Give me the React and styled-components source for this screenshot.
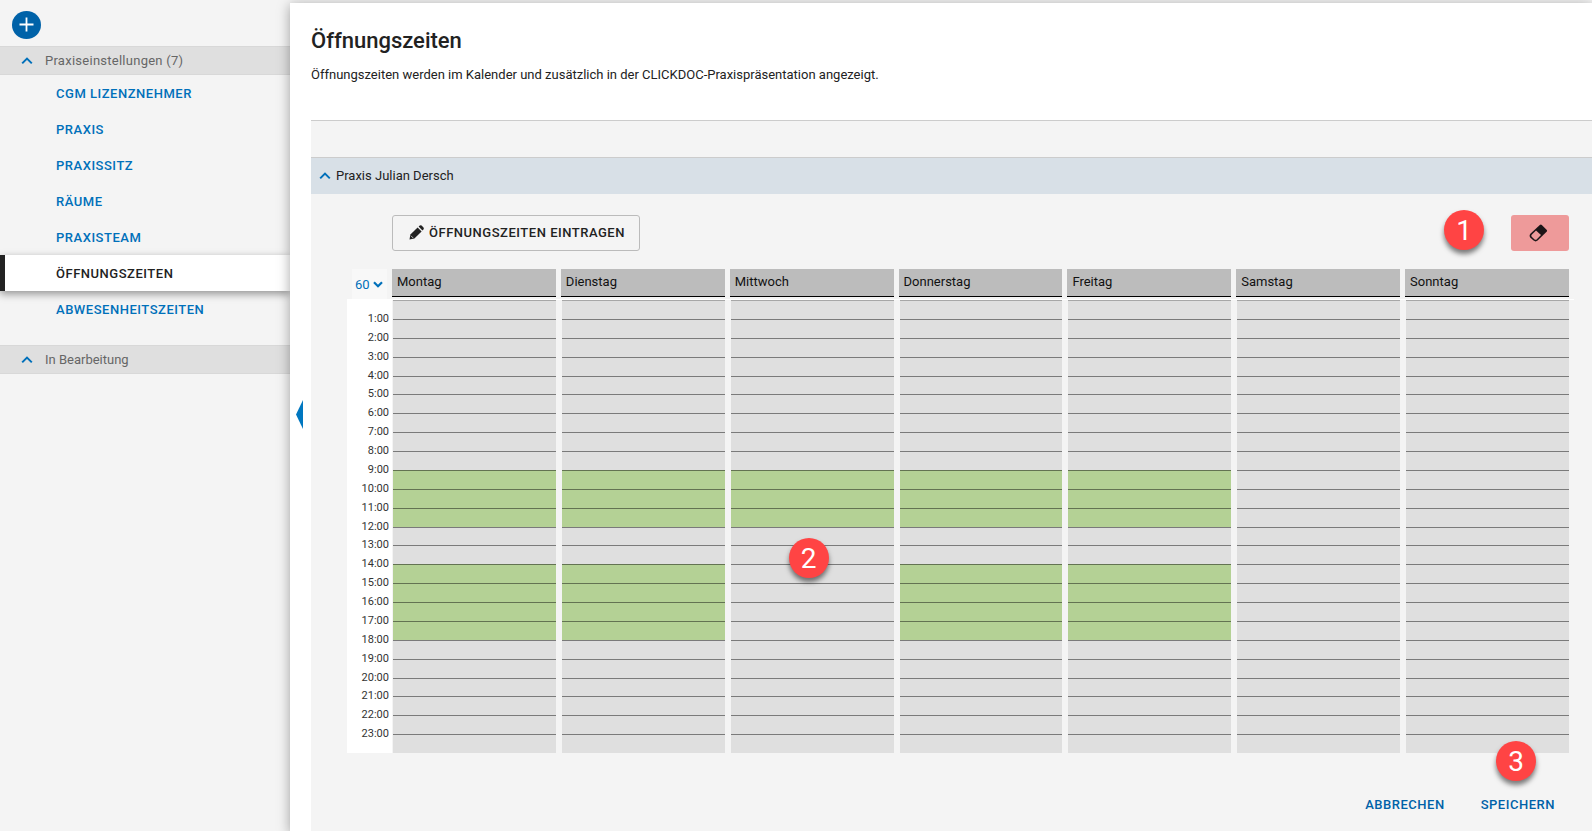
import React, { useState } from 'react';

import styled, { createGlobalStyle } from 'styled-components';

const NAV_ITEMS = [
  'CGM Lizenznehmer',
  'Praxis',
  'Praxissitz',
  'Räume',
  'Praxisteam',
  'Öffnungszeiten',
  'Abwesenheitszeiten',
];

const DAYS = [
  { name: 'Montag', open: [[9, 12], [14, 18]] },
  { name: 'Dienstag', open: [[9, 12], [14, 18]] },
  { name: 'Mittwoch', open: [[9, 12]] },
  { name: 'Donnerstag', open: [[9, 12], [14, 18]] },
  { name: 'Freitag', open: [[9, 12], [14, 18]] },
  { name: 'Samstag', open: [] },
  { name: 'Sonntag', open: [] },
];

const HOURS = Array.from({ length: 24 }, (_, hour) => hour);

const isOpen = (day, hour) =>
  day.open.some(([from, to]) => hour >= from && hour < to);

const ChevronUp = () => (
  <svg width='12' height='8' viewBox='0 0 12 8' fill='none' aria-hidden='true'>
    <path d='M1.2 6.4 6 1.6l4.8 4.8' stroke='#0070ba' strokeWidth='2' />
  </svg>
);

const ChevronDown = () => (
  <svg width='10' height='7' viewBox='0 0 10 7' fill='none' aria-hidden='true'>
    <path d='M1 1.2 5 5.2 9 1.2' stroke='#0070ba' strokeWidth='2.2' />
  </svg>
);

const PlusIcon = () => (
  <svg width='15' height='15' viewBox='0 0 15 15' aria-hidden='true'>
    <path d='M7.5 .5v14M.5 7.5h14' stroke='#fff' strokeWidth='1.8' />
  </svg>
);

const PencilIcon = () => (
  <svg width='15' height='15' viewBox='0 0 15 15' fill='#222' aria-hidden='true'>
    <path d='M0.5 14.5 1.4 9.6 8.6 2.4 12.6 6.4 5.4 13.6z' />
    <path d='M9.6 1.6 10.8 .5q.9-.7 1.8 0l1.9 1.9q.7.9 0 1.8l-1.1 1.2z' />
    <path d='M2 10.8 4.2 13' stroke='#f4f4f4' strokeWidth='.7' />
  </svg>
);

const EraserIcon = () => (
  <svg width='19' height='18' viewBox='0 0 19 18' aria-hidden='true'>
    <path
      d='M1.4 9.8 10.8 1q1-.9 2 0l4.8 4.8q.9 1 0 2L8.6 16.6q-2 1.6-4 0L1.4 13.8q-1.6-2 0-4z'
      fill='#1c1517'
    />
    <path
      d='M7 6.6 2.7 10.8q-.9 1 0 2l2.9 2.6q1 .7 2 0l4.4-4.3z'
      fill='#ee9a9a'
    />
  </svg>
);

const App = () => {
  const [interval, setInterval] = useState('60');

  return (
    <>
      <GlobalStyle />
      <Page>
        <Sidebar>
          <AddBar>
            <AddButton type='button' aria-label='Hinzufügen'>
              <PlusIcon />
            </AddButton>
          </AddBar>
          <GroupHeader type='button'>
            <ChevronUp />
            <GroupTitle $wide>Praxiseinstellungen (7)</GroupTitle>
          </GroupHeader>
          <NavList>
            {NAV_ITEMS.map(item => (
              <li key={item}>
                <NavLink href='#' $active={item === 'Öffnungszeiten'}>
                  {item}
                </NavLink>
              </li>
            ))}
          </NavList>
          <GroupHeader type='button'>
            <ChevronUp />
            <GroupTitle>In Bearbeitung</GroupTitle>
          </GroupHeader>
        </Sidebar>

        <Main>
          <CollapseStrip>
            <CollapseButton type='button' aria-label='Navigation einklappen'>
              <svg width='7' height='29' viewBox='0 0 7 29' aria-hidden='true'>
                <path d='M7 0v29L0 14.5z' fill='#0077c0' />
              </svg>
            </CollapseButton>
          </CollapseStrip>

          <Content>
            <Intro>
              <Title>Öffnungszeiten</Title>
              <Description>
                Öffnungszeiten werden im Kalender und zusätzlich in der
                CLICKDOC-Praxispräsentation angezeigt.
              </Description>
            </Intro>

            <Panel>
              <PanelHeader type='button'>
                <ChevronUp />
                Praxis Julian Dersch
              </PanelHeader>

              <PanelBody>
                <Toolbar>
                  <EntryButton type='button'>
                    <PencilIcon />
                    Öffnungszeiten eintragen
                  </EntryButton>
                  <ToolbarEnd>
                    <Badge>1</Badge>
                    <EraseButton type='button' aria-label='Löschen'>
                      <EraserIcon />
                    </EraseButton>
                  </ToolbarEnd>
                </Toolbar>

                <Schedule>
                  <Table>
                    <colgroup>
                      <TimeColumn />
                      {DAYS.map(day => (
                        <col key={day.name} />
                      ))}
                    </colgroup>
                    <thead>
                      <tr>
                        <Corner>
                          <IntervalBox>
                            <IntervalSelect
                              aria-label='Intervall in Minuten'
                              value={interval}
                              onChange={e => setInterval(e.target.value)}
                            >
                              <option>15</option>
                              <option>30</option>
                              <option>60</option>
                            </IntervalSelect>
                            <ChevronDown />
                          </IntervalBox>
                        </Corner>
                        {DAYS.map(day => (
                          <DayHead key={day.name} scope='col'>
                            <DayName>{day.name}</DayName>
                          </DayHead>
                        ))}
                      </tr>
                    </thead>
                    <tbody>
                      {HOURS.map(hour => (
                        <tr key={hour}>
                          <TimeCell scope='row'>
                            {hour > 0 && `${hour}:00`}
                          </TimeCell>
                          {DAYS.map(day => (
                            <Slot
                              key={day.name}
                              $open={isOpen(day, hour)}
                              $first={hour === 0}
                            />
                          ))}
                        </tr>
                      ))}
                    </tbody>
                  </Table>
                  <SlotBadge>2</SlotBadge>
                </Schedule>

                <Footer>
                  <TextButton type='button'>Abbrechen</TextButton>
                  <SaveWrap>
                    <SaveBadge>3</SaveBadge>
                    <TextButton type='button'>Speichern</TextButton>
                  </SaveWrap>
                </Footer>
              </PanelBody>
            </Panel>
          </Content>
        </Main>
      </Page>
    </>
  );
};

export default App;

const GlobalStyle = createGlobalStyle`
  * {
    box-sizing: border-box;
  }

  body {
    margin: 0;
    background: #f4f4f4;
    color: #222;
    font-family: Roboto, 'Liberation Sans', sans-serif;
    font-size: 13px;
  }

  button, select {
    font: inherit;
    color: inherit;
    border: 0;
    padding: 0;
    background: none;
    cursor: pointer;
  }
`;

const Page = styled.div`
  display: flex;
  min-height: 100vh;
  padding-top: 3px;
  overflow: hidden;
`;

const Sidebar = styled.nav`
  flex: 0 0 290px;
`;

const AddBar = styled.div`
  height: 43px;
  padding: 8px 12px;
`;

const AddButton = styled.button`
  display: flex;
  align-items: center;
  justify-content: center;
  width: 29px;
  height: 28px;
  padding-bottom: 1px;
  border-radius: 50%;
  background: #0062a8;
`;

const GroupHeader = styled.button`
  display: flex;
  align-items: center;
  gap: 12px;
  width: 100%;
  height: 29px;
  padding-left: 21px;
  background: #dfdfdf;
  border-block: 1px solid #d8d8d8;
  color: #666;
`;

const GroupTitle = styled.span`
  letter-spacing: ${({ $wide }) => ($wide ? '0.02em' : 'normal')};
`;

const NavList = styled.ul`
  list-style: none;
  margin: 0;
  padding: 0 0 18px;
`;

const NavLink = styled.a`
  position: relative;
  display: flex;
  align-items: center;
  height: 36px;
  padding-left: ${({ $active }) => ($active ? '51px' : '56px')};
  border-left: ${({ $active }) => ($active ? '5px solid #222' : '0')};
  background: ${({ $active }) => ($active ? '#fff' : 'transparent')};
  box-shadow: ${({ $active }) =>
    $active ? '0 3px 8px rgba(0, 0, 0, 0.4)' : 'none'};
  z-index: ${({ $active }) => ($active ? 1 : 0)};
  color: ${({ $active }) => ($active ? '#222' : '#0070ba')};
  font-weight: 500;
  letter-spacing: 0.04em;
  text-decoration: none;
  text-transform: uppercase;
`;

const Main = styled.main`
  position: relative;
  z-index: 2;
  display: flex;
  flex: 1;
  min-width: 0;
  background: #fff;
  box-shadow: 0 2px 12px rgba(0, 0, 0, 0.35);
  clip-path: inset(-3px 0 0 -16px);
`;

const CollapseStrip = styled.div`
  display: flex;
  align-items: center;
  justify-content: center;
  flex: 0 0 21px;
  padding: 0 2px 6px 0;
`;

const CollapseButton = styled.button`
  display: flex;
`;

const Content = styled.div`
  display: flex;
  flex-direction: column;
  flex: 1;
  min-width: 0;
`;

const Intro = styled.header`
  height: 117px;
  padding-top: 24px;
`;

const Title = styled.h1`
  margin: 0;
  font-size: 22px;
  line-height: 28px;
  font-weight: 500;
`;

const Description = styled.p`
  margin: 10px 0 0;
  line-height: 20px;
`;

const Panel = styled.section`
  flex: 1;
  padding-top: 36px;
  border-top: 1px solid #ccc;
  background: #f4f4f4;
`;

const PanelHeader = styled.button`
  display: flex;
  align-items: center;
  gap: 5px;
  width: 100%;
  height: 37px;
  padding: 0 0 1px 8px;
  background: #d8e0e7;
  border-top: 1px solid #ccc;
`;

const PanelBody = styled.div`
  padding: 21px 18px 10px 36px;
`;

const Toolbar = styled.div`
  display: flex;
  align-items: center;
  justify-content: space-between;
  height: 36px;
  margin: 0 5px 18px 45px;
`;

const EntryButton = styled.button`
  display: flex;
  align-items: center;
  gap: 5px;
  height: 36px;
  padding: 0 14px 1px 16px;
  border: 1px solid #bbb;
  border-radius: 3px;
  font-weight: 500;
  letter-spacing: 0.04em;
  text-transform: uppercase;
`;

const ToolbarEnd = styled.div`
  display: flex;
  align-items: center;
  gap: 27px;
`;

const EraseButton = styled.button`
  display: flex;
  align-items: center;
  justify-content: center;
  width: 58px;
  height: 36px;
  padding-right: 3px;
  border-radius: 3px;
  background: #ee9a9a;
`;

const Badge = styled.span`
  display: flex;
  align-items: center;
  justify-content: center;
  width: 40px;
  height: 40px;
  margin-bottom: 6px;
  border-radius: 50%;
  background: #ff4444;
  box-shadow: 0 4px 5px rgba(0, 0, 0, 0.5);
  color: #fff;
  font-size: 28px;
  pointer-events: none;
`;

const SlotBadge = styled(Badge)`
  position: absolute;
  top: 269px;
  left: 36%;
`;

const SaveBadge = styled(Badge)`
  position: absolute;
  right: 35px;
  bottom: 35px;
`;

const Schedule = styled.div`
  position: relative;
`;

const Table = styled.table`
  width: 100%;
  height: 484px;
  table-layout: fixed;
  border-collapse: separate;
  border-spacing: 0;
`;

const TimeColumn = styled.col`
  width: 45px;
`;

const Corner = styled.td`
  height: 31px;
  padding: 0 5px;
  border-bottom: 1px solid #fff;
`;

const IntervalBox = styled.div`
  display: flex;
  align-items: center;
  height: 30px;
  padding-left: 3px;
  background: #f8f8f8;
  color: #0070ba;
`;

const IntervalSelect = styled.select`
  flex: 0 0 18px;
  width: 18px;
  appearance: none;
  font-size: 13px;
  outline: none;
`;

const DayHead = styled.th`
  height: 31px;
  padding: 0 5px 2px 0;
  border-bottom: 1px solid #fff;
  font-weight: 400;
  text-align: left;
`;

const DayName = styled.div`
  height: 28px;
  padding: 0 5px;
  border-bottom: 1px solid #000;
  background: #bcbcbc;
  color: #111;
  line-height: 26px;
`;

const TimeCell = styled.th`
  padding: 0 3px 0 0;
  background: #fff;
  color: #333;
  font-size: 11px;
  font-weight: 400;
  line-height: 0;
  text-align: right;
  vertical-align: top;
`;

const Slot = styled.td`
  padding: 0;
  border-left: 1px solid transparent;
  border-right: 5px solid transparent;
  background: ${({ $open }) => ($open ? '#b4d195' : '#dfdfdf')} padding-box;
  box-shadow: inset 0 1px 0
    ${({ $first }) => ($first ? 'rgba(0, 0, 0, 0.25)' : 'rgba(0, 0, 0, 0.45)')};
`;

const Footer = styled.footer`
  display: flex;
  justify-content: flex-end;
  gap: 4px;
  padding-top: 33px;
  padding-right: 3px;
`;

const SaveWrap = styled.div`
  position: relative;
`;

const TextButton = styled.button`
  height: 36px;
  padding: 0 16px;
  color: #0062a8;
  font-weight: 500;
  letter-spacing: 0.04em;
  text-transform: uppercase;
`;
